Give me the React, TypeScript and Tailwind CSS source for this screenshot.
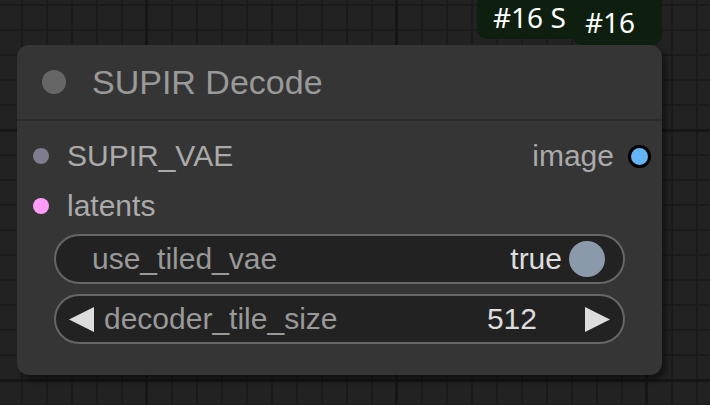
const Slot = ({ color, border }: { color: string; border?: boolean }) => (
  <span
    className={`block rounded-full ${color} ${border ? 'border-[3px] border-black w-[23px] h-[23px]' : 'w-4 h-4'}`}
  />
);

const App = () => {
  return (
    <div className="relative w-[710px] h-[405px] overflow-hidden bg-[#222222] font-['Liberation_Sans',Arial,sans-serif]">
      {/* canvas grid */}
      <div className="absolute inset-0 bg-[linear-gradient(#1b1b1b_2px,transparent_2px),linear-gradient(90deg,#1b1b1b_2px,transparent_2px)] bg-[size:25px_25px] bg-[position:21px_4px]" />
      <div className="absolute inset-0 bg-[linear-gradient(#161616_3px,transparent_3px),linear-gradient(90deg,#161616_3px,transparent_3px)] bg-[size:250px_250px] bg-[position:145px_129px]" />

      {/* id badges */}
      <div className="absolute left-[477px] top-[-10px] w-[95px] h-[49px] rounded-l-[10px] bg-[#0e1f10] pl-4 pt-[10px] text-[28px] leading-[34px] text-white font-['Noto_Sans',sans-serif] overflow-hidden whitespace-nowrap">
        #16 S
      </div>
      <div className="absolute left-[572px] top-[-10px] w-[90px] h-[55px] rounded-[10px] bg-[#0e1f10] pl-[13px] pt-[15px] text-[28px] leading-[34px] text-white font-['Noto_Sans',sans-serif]">
        #16
      </div>

      {/* node */}
      <div className="absolute left-[17px] top-[45px] w-[645px] h-[330px] rounded-[12px] bg-[#353535] shadow-[4px_5px_6px_rgba(0,0,0,0.45)] flex flex-col">
        <div className="h-[76px] flex items-center border-b-2 border-[#2b2b2b] pl-[25px]">
          <span className="w-6 h-6 rounded-full bg-[#666666]" />
          <span className="ml-[26px] text-[34px] leading-none text-[#999999]">SUPIR Decode</span>
        </div>

        <div className="flex flex-col pt-[10px]">
          <div className="h-[50px] flex items-center pl-4 pr-[11px]">
            <Slot color="bg-[#7e7c8e]" />
            <span className="ml-[18px] text-[30px] leading-none text-[#aaaaaa]">SUPIR_VAE</span>
            <span className="ml-auto mr-[14px] text-[30px] leading-none text-[#aaaaaa]">image</span>
            <Slot color="bg-[#64b5f6]" border />
          </div>
          <div className="h-[50px] flex items-center pl-4">
            <Slot color="bg-[#ff9cf9]" />
            <span className="ml-[18px] text-[30px] leading-none text-[#aaaaaa]">latents</span>
          </div>

          <div className="mx-[37px] mt-[3px] flex flex-col gap-[10px]">
            <div className="h-[50px] rounded-full border-2 border-[#666666] bg-[#222222] flex items-center pl-[36px] pr-[18px]">
              <span className="text-[30px] leading-none text-[#999999]">use_tiled_vae</span>
              <span className="ml-auto text-[30px] leading-none text-[#dddddd]">true</span>
              <span className="ml-[7px] w-9 h-9 rounded-full bg-[#8a9aaa]" />
            </div>
            <div className="h-[50px] rounded-full border-2 border-[#666666] bg-[#222222] flex items-center pl-[13px] pr-[13px]">
              <svg width="25" height="25" viewBox="0 0 25 25">
                <polygon points="25,0 25,25 0,12.5" fill="#dddddd" />
              </svg>
              <span className="ml-[10px] text-[30px] leading-none text-[#999999]">decoder_tile_size</span>
              <span className="ml-auto mr-[48px] text-[30px] leading-none text-[#dddddd]">512</span>
              <svg width="25" height="25" viewBox="0 0 25 25">
                <polygon points="0,0 0,25 25,12.5" fill="#dddddd" />
              </svg>
            </div>
          </div>
        </div>
      </div>
    </div>
  );
};

export default App;
